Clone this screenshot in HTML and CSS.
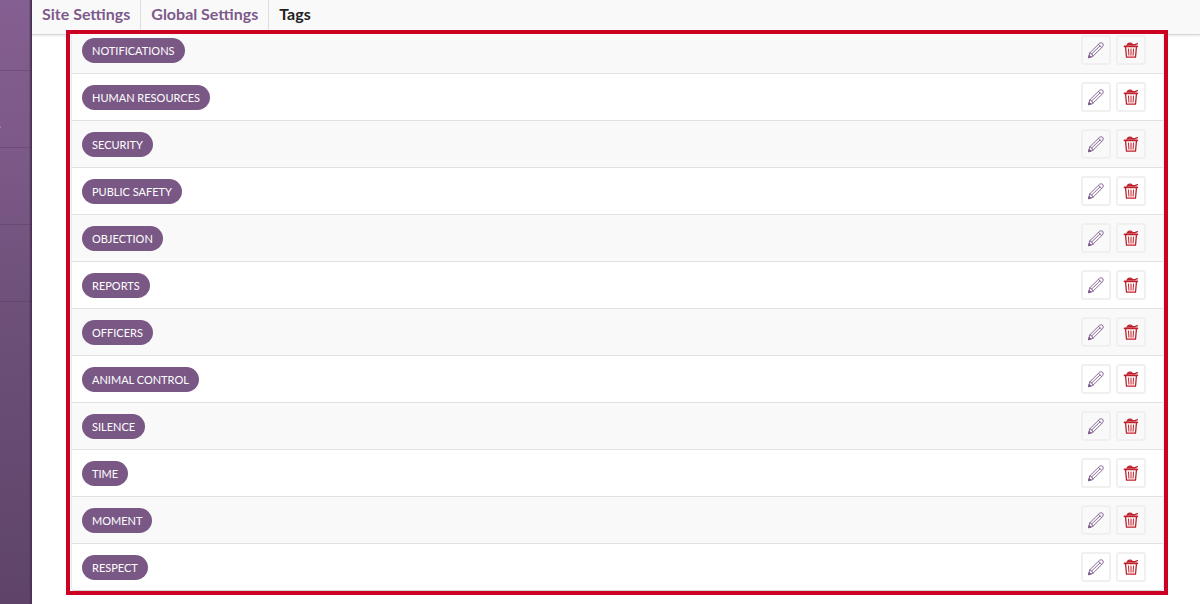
FILE: index.html
```html
<!DOCTYPE html>
<html lang="en">
<head>
  <meta charset="UTF-8" />
  <title>Tags</title>
  <meta name="viewport" content="width=device-width, initial-scale=1.0"/>
  <link rel="stylesheet" href="styles.css">
</head>
<body>
  <!-- icons shared by every row -->
  <svg class="icon-defs" aria-hidden="true">
    <symbol id="icon-edit" viewBox="0 0 18 18">
      <g fill="none" stroke="#7d5a8b" stroke-width="0.9" stroke-linejoin="round" stroke-linecap="round">
        <path d="M1.6 16.4 L2.8 11.8 L12.6 2.2 Q14.2 1.2 15.8 2.4 Q16.8 4 15.7 5.6 L6 15.2 Z"/>
        <path d="M2.8 11.8 Q5.6 12.2 6 15.2 M11.6 3.4 L14.6 6.4 M4.8 12.8 L13 4.9"/>
        <path d="M1.6 16.4 L2.2 14.1 L3.9 15.8 Z" fill="#7d5a8b"/>
      </g>
    </symbol>
    <symbol id="icon-delete" viewBox="0 0 18 18">
      <g fill="none" stroke="#c0202b" stroke-linejoin="round" stroke-linecap="round">
        <path stroke-width="1.6" d="M2.4 5.4 H15.4"/>
        <path stroke-width="1.4" d="M5 4.2 Q6.4 1.4 9.4 2.4 L10.6 3.9 M6.6 3.8 H12.4 L15.4 2.7"/>
        <path stroke-width="1.3" d="M3.6 6.4 L4.5 16.2 H13.5 L14.4 6.4"/>
        <path stroke-width="1" d="M6.5 8 L6.9 14.2 M9 8 V14.2 M11.5 8 L11.1 14.2"/>
      </g>
    </symbol>
  </svg>

  <div class="layout">
    <nav class="sidebar" aria-label="Main">
      <ul>
        <li></li>
        <li><a href="#">s</a></li>
        <li></li>
        <li><a href="#">r</a></li>
      </ul>
    </nav>

    <div class="page">
      <header class="topbar">
        <a href="#">Site Settings</a>
        <a href="#">Global Settings</a>
        <span class="current">Tags</span>
      </header>

      <main class="highlight">
        <table class="tags">
          <tbody id="tagRows"></tbody>
        </table>
      </main>
    </div>
  </div>

  <script src="tags.js"></script>
</body>
</html>
```
FILE: styles.css
```css
*{box-sizing:border-box;}
body{margin:0;font-family:Lato, "Open Sans", sans-serif;background:#fff;color:#222;}
.icon-defs{position:absolute;width:0;height:0;}

.layout{display:flex;min-height:100vh;}

/* ---------- sidebar ---------- */
.sidebar{flex:0 0 32px;overflow:hidden;
         background:linear-gradient(to right, transparent 29px, #4b3356 31px),
                    linear-gradient(#845f91, #7a5886 30%, #6e5079 50%, #5f4468);}
.sidebar ul{list-style:none;margin:0;padding:0;}
.sidebar li{height:77px;padding-top:47px;border-bottom:1px solid rgba(60,30,75,.22);}
.sidebar li:first-child{height:71px;}
.sidebar a{display:block;margin-left:-4px;color:#cbbcd0;font-size:11px;line-height:14px;text-decoration:none;}

/* ---------- top bar ---------- */
.page{flex:1;min-width:0;}
.topbar{display:flex;height:35px;background:#f9f9f9;border-bottom:1px solid #d8d8d8;
        box-shadow:0 1px 2px rgba(0,0,0,.1);font-size:16px;font-weight:bold;line-height:28px;}
.topbar > *{padding:0 10px;color:#7d5a8b;text-decoration:none;border-right:1px solid #ddd;}
.topbar .current{color:#222;border-right:none;}

/* ---------- tag list ---------- */
.highlight{position:relative;margin:-5px 32px 9px 34px;padding:0 0 0 1px;overflow:hidden;
           background:#fff;border:4px solid #cc0022;}
.tags{width:100%;margin-top:-7px;border-collapse:separate;border-spacing:0;
      border:1px solid #ececec;border-bottom-color:#d4d4d5;border-top:none;border-radius:0 0 4px 4px;}
.tags td{height:47px;padding:0 10px;border-bottom:1px solid #e1e1e1;vertical-align:middle;}
.tags tr:nth-child(odd) td{background:#f9f9f9;}
.tags tr:last-child td{height:46px;border-bottom:none;}
.tag{display:block;width:max-content;padding:0 10px;border-radius:13px;background:#7a5886;color:#fff;
     font-size:11px;line-height:25px;text-transform:uppercase;}
.actions{width:92px;}
.buttons{display:flex;justify-content:flex-end;gap:5px;padding-right:7px;}
.buttons button{display:flex;align-items:center;justify-content:center;width:30px;height:30px;padding:0;
                background:transparent;border:2px solid #f0f0f0;border-radius:3px;cursor:pointer;}
.buttons button:hover{border-color:#ddd;}
.buttons svg{width:18px;height:18px;}
```
FILE: tags.js
```js
const tags = [
  "Notifications", "Human Resources", "Security", "Public Safety",
  "Objection", "Reports", "Officers", "Animal Control",
  "Silence", "Time", "Moment", "Respect"
];

document.getElementById("tagRows").innerHTML = tags.map(tag => `
  <tr>
    <td><span class="tag">${tag}</span></td>
    <td class="actions">
      <div class="buttons">
        <button type="button" aria-label="Edit ${tag}"><svg><use href="#icon-edit"/></svg></button>
        <button type="button" aria-label="Delete ${tag}"><svg><use href="#icon-delete"/></svg></button>
      </div>
    </td>
  </tr>`).join("");
```
